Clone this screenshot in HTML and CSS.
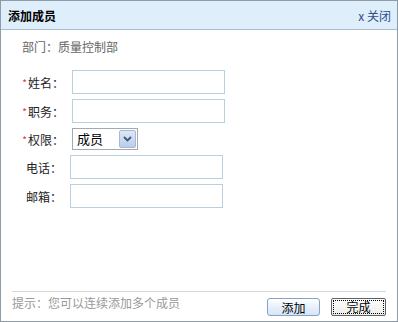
FILE: index.html
```html
<!DOCTYPE html>
<html lang="zh-CN">
<head>
    <meta charset="UTF-8">
    <title>添加成员</title>
    <link rel="stylesheet" href="styles.css">
</head>
<body>

<div class="dialog">
    <div class="dialog-head">
        <span class="dialog-title">添加成员</span>
        <a class="dialog-close" href="#">x 关闭</a>
    </div>

    <div class="dialog-body">
        <div class="dept">部门：质量控制部</div>

        <div class="form">
            <div class="form-row">
                <label class="form-label"><span class="req">*</span>姓名：</label>
                <input class="text-input" type="text">
            </div>
            <div class="form-row">
                <label class="form-label"><span class="req">*</span>职务：</label>
                <input class="text-input" type="text">
            </div>
            <div class="form-row">
                <label class="form-label"><span class="req">*</span>权限：</label>
                <div class="fake-select">
                    <span class="fake-select-value">成员</span>
                    <span class="fake-select-btn">
                        <svg width="9" height="6" viewBox="0 0 9 6">
                            <path d="M1 1 L4.5 4.5 L8 1" fill="none" stroke="#3d5680" stroke-width="1.8"/>
                        </svg>
                    </span>
                </div>
            </div>
            <div class="form-row">
                <label class="form-label short">电话：</label>
                <input class="text-input" type="text">
            </div>
            <div class="form-row">
                <label class="form-label short">邮箱：</label>
                <input class="text-input" type="text">
            </div>
        </div>

        <div class="dialog-foot">
            <span class="hint">提示：您可以连续添加多个成员</span>
            <div class="foot-buttons">
                <button class="btn btn-add">添加</button>
                <button class="btn btn-done"><span class="btn-focus">完成</span></button>
            </div>
        </div>
    </div>
</div>

</body>
</html>
```

FILE: styles.css
```css
* {
    margin: 0;
    padding: 0;
    box-sizing: border-box;
}
body {
    font-family: "Noto Sans CJK SC", "DejaVu Sans", sans-serif;
    font-size: 12px;
    color: #333;
    background: #fff;
}
.dialog {
    width: 398px;
    height: 322px;
    border: 1px solid #8f9ba7;
    display: flex;
    flex-direction: column;
}
.dialog-head {
    height: 29px;
    background-color: #deeefb;
    border-bottom: 1px solid #a9bccf;
    display: flex;
    align-items: center;
    justify-content: space-between;
    padding: 0 6px 0 7px;
}
.dialog-title {
    font-weight: bold;
    color: #000;
    font-size: 12px;
}
.dialog-close {
    color: #2b4f8a;
    text-decoration: none;
}
.dialog-body {
    flex: 1;
    display: flex;
    flex-direction: column;
    padding: 0 11px;
}
.dept {
    color: #666;
    line-height: 14px;
    padding: 10px 0 0 10px;
}
.form {
    display: flex;
    flex-direction: column;
    gap: 5px;
    margin-top: 16px;
    padding-left: 10px;
}
.form-row {
    display: flex;
    align-items: center;
}
.form-label {
    width: 50px;
    text-align: right;
    padding-right: 8px;
    color: #222;
}
.form-label.short {
    width: 48px;
}
.req {
    color: #d9364f;
    font-size: 10px;
    margin-right: 1px;
    vertical-align: 1px;
}
.text-input {
    width: 153px;
    height: 24px;
    border: 1px solid #b9d1de;
    background: #fff;
    outline: none;
}
.fake-select {
    width: 66px;
    height: 22px;
    border: 1px solid #a3aab2;
    display: flex;
    align-items: stretch;
    background: #fff;
}
.fake-select-value {
    flex: 1;
    padding-left: 4px;
    line-height: 20px;
    font-size: 13px;
    color: #000;
}
.fake-select-btn {
    width: 17px;
    margin: 1px;
    border: 1px solid #a6b9d6;
    border-radius: 2px;
    background: linear-gradient(#dde7f6, #bccde8);
    display: flex;
    align-items: center;
    justify-content: center;
}
.dialog-foot {
    margin-top: auto;
    border-top: 1px solid #d4d8dc;
    display: flex;
    justify-content: space-between;
    align-items: flex-start;
    padding: 3px 0 5px;
}
.hint {
    color: #999;
    line-height: 16px;
}
.foot-buttons {
    display: flex;
    gap: 11px;
    margin-top: 3px;
}
.btn {
    height: 18px;
    font-family: inherit;
    font-size: 12px;
    color: #000;
    cursor: pointer;
}
.btn-add {
    width: 53px;
    border: 1px solid #88a2c2;
    border-radius: 3px;
    background: linear-gradient(#ffffff, #e7f0fb 50%, #d6e5f6);
}
.btn-done {
    width: 55px;
    border: 1px solid #5e6266;
    border-radius: 2px;
    background: linear-gradient(#ffffff, #ecece8);
    padding: 1px;
}
.btn-focus {
    display: block;
    height: 100%;
    border: 1px dotted #000;
    line-height: 12px;
}
```
